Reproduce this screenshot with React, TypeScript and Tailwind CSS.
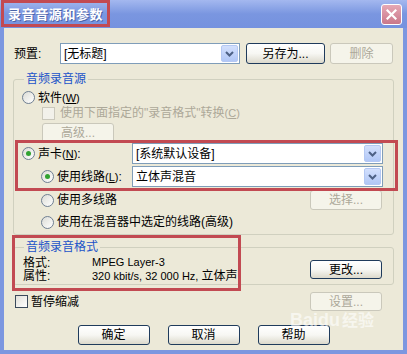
import React from "react";

const FONT = "font-['Liberation_Sans','Noto_Sans_CJK_SC',sans-serif]";

function Mn({ c }: { c: string }) {
  return (
    <span className="text-[11px] font-['Liberation_Sans',sans-serif]">
      (<span className="underline">{c}</span>)
    </span>
  );
}

function Btn({ label, w, h = 20, disabled = false }: { label: React.ReactNode; w: number; h?: number; disabled?: boolean }) {
  return (
    <div
      style={{ width: w, height: h }}
      className={
        "shrink-0 flex items-center justify-center rounded-[3px] border text-[12px] leading-none " +
        (disabled
          ? "border-[#cac8bb] bg-[#f5f4ea] text-[#aca899]"
          : "border-[#1f3b5c] bg-gradient-to-b from-[#ffffff] via-[#f7f7f3] to-[#dcd9cc] text-black")
      }
    >
      {label}
    </div>
  );
}

function Select({ value, w }: { value: string; w: number }) {
  return (
    <div style={{ width: w }} className="shrink-0 h-[21px] border border-[#7f9db9] bg-white flex items-center pl-[3px] pr-[1px]">
      <span className="flex-1 text-[12px] leading-none text-black">{value}</span>
      <div className="w-[17px] h-[17px] rounded-[2px] border border-[#b4c8f3] bg-gradient-to-b from-[#d3e0fd] to-[#b1c7f6] flex items-center justify-center">
        <svg width="9" height="6" viewBox="0 0 9 6">
          <polyline points="1,1 4.5,4.5 8,1" fill="none" stroke="#4d6185" strokeWidth="2" />
        </svg>
      </div>
    </div>
  );
}

function Radio({ checked = false }: { checked?: boolean }) {
  return (
    <div className="shrink-0 w-[13px] h-[13px] rounded-full border border-[#6f7f92] bg-gradient-to-br from-[#dcdcd6] to-[#ffffff] flex items-center justify-center">
      {checked && <div className="w-[5px] h-[5px] rounded-full bg-[#31a231]" />}
    </div>
  );
}

function Check({ disabled = false }: { disabled?: boolean }) {
  return (
    <div
      className={
        "shrink-0 w-[13px] h-[13px] border " +
        (disabled ? "border-[#cac8bb] bg-[#f2f1ea]" : "border-[#3b4a5c] bg-gradient-to-br from-[#e1e0d9] to-[#ffffff]")
      }
    />
  );
}

export default function App() {
  return (
    <div className={"relative w-[407px] h-[354px] overflow-hidden bg-[#7c97e0] flex flex-col " + FONT}>
      {/* title bar */}
      <div className="h-[28px] shrink-0 flex items-center bg-gradient-to-b from-[#a4b8ef] via-[#7a96e0] to-[#7592df]">
        <span className="pl-[8px] text-[13px] font-bold tracking-[0.6px] text-white leading-none [text-shadow:1px_1px_0_#4a63a8]">
          录音音源和参数
        </span>
        <div className="ml-auto mr-[5px] w-[21px] h-[21px] rounded-[3px] border border-white bg-gradient-to-b from-[#e6a8b5] to-[#c9778a] flex items-center justify-center">
          <svg width="11" height="11" viewBox="0 0 11 11">
            <path d="M1.5 1.5 L9.5 9.5 M9.5 1.5 L1.5 9.5" stroke="white" strokeWidth="2.2" strokeLinecap="square" />
          </svg>
        </div>
      </div>

      {/* body */}
      <div className="mx-[4px] h-[322px] shrink-0 bg-[#ece9d8] flex flex-col text-[12px] text-black">
        {/* preset row */}
        <div className="mt-[15px] h-[21px] flex items-center pl-[10px]">
          <span className="w-[46px] leading-none">预置:</span>
          <Select value="[无标题]" w={180} />
          <div className="ml-[6px]">
            <Btn label="另存为..." w={79} h={21} />
          </div>
          <div className="ml-[5px]">
            <Btn label="删除" w={63} h={21} disabled />
          </div>
        </div>

        {/* group 1 */}
        <fieldset className="mt-[7px] ml-[9px] w-[381px] border border-[#d0d0bf] rounded-[3px] pb-[4px]">
          <legend className="ml-[10px] px-[2px] h-[16px] leading-[16px] text-[#2153c9]">音频录音源</legend>
          <div className="mt-[3px] h-[15px] flex items-center pl-[8px]">
            <Radio />
            <span className="ml-[3px] leading-none">
              软件<Mn c="W" />
            </span>
          </div>
          <div className="h-[16px] flex items-center pl-[28px]">
            <Check disabled />
            <span className="ml-[5px] leading-none text-[#aca899]">
              使用下面指定的"录音格式"转换<Mn c="C" />
            </span>
          </div>
          <div className="mt-[2px] h-[20px] flex items-center pl-[28px]">
            <Btn label="高级..." w={72} h={20} disabled />
          </div>
          <div className="h-[21px] flex items-center pl-[8px]">
            <Radio checked />
            <span className="ml-[3px] w-[94px] leading-none">
              声卡<Mn c="N" />:
            </span>
            <Select value="[系统默认设备]" w={251} />
          </div>
          <div className="mt-[2px] h-[21px] flex items-center pl-[27px]">
            <Radio checked />
            <span className="ml-[3px] w-[75px] leading-none">
              使用线路<Mn c="L" />:
            </span>
            <Select value="立体声混音" w={251} />
          </div>
          <div className="mt-[3px] h-[20px] flex items-center pl-[27px] pr-[11px]">
            <Radio />
            <span className="ml-[3px] leading-none">使用多线路</span>
            <div className="ml-auto">
              <Btn label="选择..." w={72} h={20} disabled />
            </div>
          </div>
          <div className="mt-[4px] h-[16px] flex items-center pl-[27px]">
            <Radio />
            <span className="ml-[3px] leading-none">使用在混音器中选定的线路(高级)</span>
          </div>
        </fieldset>

        {/* group 2 */}
        <fieldset className="mt-[5px] ml-[9px] w-[381px] border border-[#d0d0bf] rounded-[3px] pb-[2px]">
          <legend className="ml-[10px] px-[2px] h-[14px] leading-[14px] text-[#2153c9]">音频录音格式</legend>
          <div className="flex items-start pr-[11px]">
            <div className="mt-[2px] pl-[9px] flex flex-col">
              <div className="h-[13px] flex items-center">
                <span className="w-[69px] leading-none">格式:</span>
                <span className="text-[11px] leading-none font-['Liberation_Sans',sans-serif]">MPEG Layer-3</span>
              </div>
              <div className="h-[13px] flex items-center">
                <span className="w-[69px] leading-none">属性:</span>
                <span className="text-[11px] leading-none font-['Liberation_Sans',sans-serif]">
                  320 kbit/s, 32 000 Hz, <span className="text-[12px] font-['Noto_Sans_CJK_SC',sans-serif]">立体声</span>
                </span>
              </div>
            </div>
            <div className="ml-auto mt-[6px]">
              <Btn label="更改..." w={72} h={19} />
            </div>
          </div>
        </fieldset>

        {/* pause row */}
        <div className="mt-[7px] h-[19px] flex items-center pl-[11px] pr-[21px]">
          <Check />
          <span className="ml-[3px] leading-none text-[12px]">暂停缩减</span>
          <div className="ml-auto">
            <Btn label="设置..." w={72} h={19} disabled />
          </div>
        </div>

        {/* bottom buttons */}
        <div className="mt-[14px] h-[20px] flex justify-center gap-[18px]">
          <Btn label="确定" w={72} h={20} />
          <Btn label="取消" w={72} h={20} />
          <Btn label="帮助" w={72} h={20} />
        </div>
      </div>

      {/* annotation boxes */}
      <div className="absolute left-[1px] top-0 w-[109px] h-[27px] border-[3px] border-[#c24a52]" />
      <div className="absolute left-[15px] top-[140px] w-[383px] h-[51px] border-[3px] border-[#c24a52]" />
      <div className="absolute left-[12px] top-[235px] w-[229px] h-[56px] border-[3px] border-[#c24a52]" />

      {/* watermark */}
      <div className="absolute left-[290px] top-[311px] flex items-end text-white/60 font-bold leading-none pointer-events-none">
        <span className="text-[18px] leading-none font-['Liberation_Sans',sans-serif]">Bai</span>
        <span className="text-[18px] leading-none font-['Liberation_Sans',sans-serif]">du</span>
        <span className="ml-[2px] text-[16px] leading-none">经验</span>
      </div>
    </div>
  );
}
